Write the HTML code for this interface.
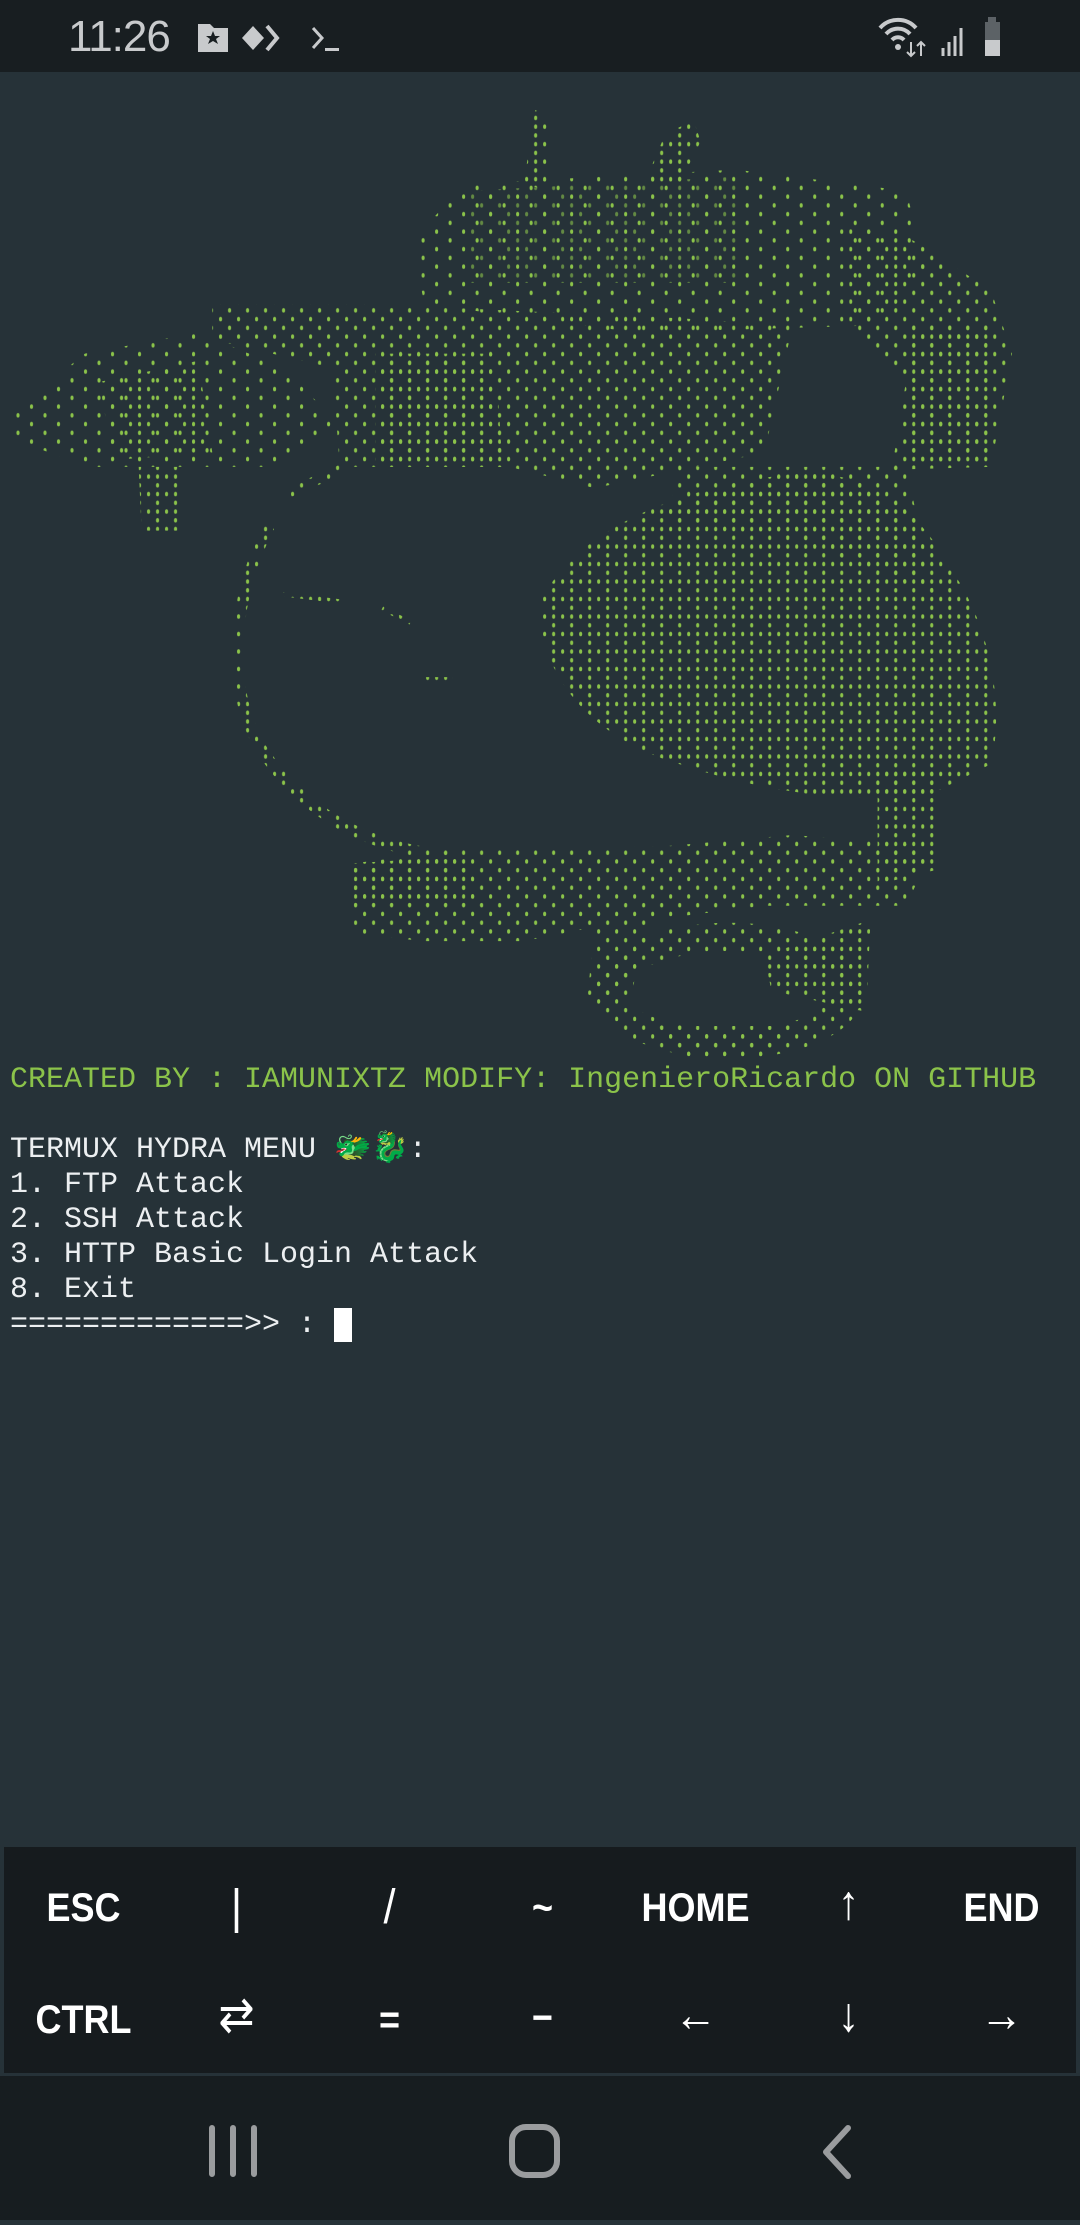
<!DOCTYPE html>
<html><head><meta charset="utf-8"><style>
*{margin:0;padding:0;box-sizing:border-box}
html,body{width:1080px;height:2220px;overflow:hidden;background:#263238}
.sb{position:absolute;left:0;top:0;width:1080px;height:72px;background:#181e21;color:#c8cacc;font-family:"Liberation Sans",sans-serif}
.time{position:absolute;left:68px;top:12px;font-size:44px;letter-spacing:-1px}
.term{position:absolute;left:10px;top:1063px;font-family:"Liberation Mono","DejaVu Sans Mono",monospace;font-size:30px;line-height:35px;color:#eceff1;white-space:pre}
.g{color:#8bc34a}
.cur{display:inline-block;width:18px;height:34px;background:#fff;vertical-align:top}
.kb{position:absolute;left:4px;top:1847px;width:1072px;height:226px;background:#161b1e;font-family:"Liberation Sans",sans-serif;color:#fff}
.k{position:absolute;width:153px;text-align:center;font-size:40px;line-height:50px;font-weight:bold;transform:scaleX(.9)}
.a{font-weight:normal;font-size:48px}
.nav{position:absolute;left:0;top:2076px;width:1080px;height:144px;background:#171d20}
</style></head><body>
<div class="sb">
<div class="time">11:26</div>
<svg style="position:absolute;left:195px;top:18px" width="160" height="40" viewBox="0 0 160 40">
<path d="M3 6 h12 l4 4 h14 v24 h-30z" fill="#c8cacc"/>
<path d="M18 13 l2 5 h5 l-4 3 2 5 -5 -3 -5 3 2 -5 -4 -3 h5z" fill="#181e21"/>
<path d="M58 8 l11 12 -11 12 -11 -12z" fill="#c8cacc"/>
<path d="M72 8 l10 12 -10 12" stroke="#c8cacc" stroke-width="4" fill="none"/>
<path d="M118 10 l9 10 -9 10" stroke="#c8cacc" stroke-width="3" fill="none"/>
<rect x="130" y="30" width="14" height="3" fill="#c8cacc"/>
</svg>
<svg style="position:absolute;left:878px;top:14px" width="140" height="46" viewBox="0 0 140 46">
<path d="M2 14 a24 24 0 0 1 36 0 M8 20 a16 16 0 0 1 24 0 M14 26 a8 8 0 0 1 12 0" stroke="#c8cacc" stroke-width="4" fill="none"/>
<circle cx="20" cy="33" r="3" fill="#c8cacc"/>
<path d="M33 28 v14 M29 38 l4 4 4 -4 M43 42 v-14 M39 32 l4 -4 4 4" stroke="#c8cacc" stroke-width="2" fill="none"/>
<path d="M65 42 v-8 M71 42 v-14 M77 42 v-20 M83 42 v-28" stroke="#c8cacc" stroke-width="3"/>
<rect x="110" y="3" width="8" height="6" fill="#5c6266"/>
<rect x="107" y="8" width="15" height="18" fill="#5c6266"/>
<rect x="107" y="26" width="15" height="16" fill="#c8cacc"/>
</svg>
</div>

<svg style="position:absolute;left:0;top:72px" width="1080" height="988" viewBox="0 51 763 698">
<defs>
<pattern id="d" width="6.36" height="6.18" patternUnits="userSpaceOnUse"><ellipse cx="3.18" cy="3.09" rx="1.1" ry="1.6" fill="#8bc34a"/></pattern>
<pattern id="m" width="12.72" height="12.36" patternUnits="userSpaceOnUse"><ellipse cx="3.18" cy="3.09" rx="1.1" ry="1.6" fill="#8bc34a"/><ellipse cx="9.54" cy="9.27" rx="1.1" ry="1.6" fill="#8bc34a"/><ellipse cx="9.54" cy="3.09" rx="1.1" ry="1.6" fill="#8bc34a"/></pattern>
<pattern id="s" width="12.72" height="12.36" patternUnits="userSpaceOnUse"><ellipse cx="3.18" cy="3.09" rx="1.1" ry="1.6" fill="#8bc34a"/><ellipse cx="9.54" cy="9.27" rx="1.1" ry="1.6" fill="#8bc34a"/></pattern>
<pattern id="t" width="19.08" height="12.36" patternUnits="userSpaceOnUse"><ellipse cx="3.18" cy="3.09" rx="1.1" ry="1.6" fill="#8bc34a"/><ellipse cx="12.72" cy="9.27" rx="1.1" ry="1.6" fill="#8bc34a"/></pattern>
</defs>
<g>
<path d="M370 130 L378 78 L386 80 L388 135 Z" fill="url(#m)"/>
<path d="M455 130 L470 95 L490 85 L495 100 L480 130 Z" fill="url(#m)"/>
<path d="M290 170 L330 130 L520 120 L640 135 L655 190 L620 230 L450 235 L300 215 Z" fill="url(#t)"/>
<path d="M330 135 L520 125 L520 200 L330 200 Z" fill="url(#s)" opacity=".6"/>
<path d="M600 160 L645 170 L700 205 L715 250 L700 330 L630 332 L640 270 L600 230 Z" fill="url(#s)"/>
<path d="M640 230 L700 230 L700 330 L640 330 Z" fill="url(#m)"/>
<path d="M150 215 L260 215 L480 225 L560 230 L540 320 L420 345 L360 330 L240 330 L235 260 L150 240 Z" fill="url(#s)"/>
<path d="M265 250 L350 250 L355 330 L265 330 Z" fill="url(#m)"/>
<path d="M10 290 L60 250 L140 235 L200 260 L240 300 L200 330 L150 330 L60 330 L10 310 Z" fill="url(#t)"/>
<path d="M70 270 L140 255 L150 320 L80 325 Z" fill="url(#s)"/>
<path d="M98 330 L128 330 L128 375 L100 375 Z" fill="url(#m)"/>
<path d="M380 430 C400 380 470 345 560 335 C610 330 650 360 670 400 C700 440 710 500 700 540 L660 560 C610 570 540 560 480 540 C430 525 385 490 380 430 Z" fill="url(#m)"/>
<path d="M480 330 L640 330 L660 420 L560 380 L470 370 Z" fill="url(#s)"/>
<path d="M620 545 L662 545 L660 615 L620 625 Z" fill="url(#m)"/>
<path d="M190 372 C165 420 158 485 185 530 C215 575 260 600 320 605" stroke="url(#m)" stroke-width="8" fill="none"/>
<path d="M200 350 L245 330" stroke="url(#s)" stroke-width="7" fill="none"/>
<path d="M200 420 L240 425 M270 430 L290 440 M300 480 L320 480" stroke="url(#d)" stroke-width="3" fill="none"/>
<path d="M250 610 L330 600 L470 598 L560 590 L660 598 L640 640 L540 640 L460 650 L445 705 L415 705 L420 655 L370 665 L300 665 L250 660 Z" fill="url(#s)"/>
<path d="M250 610 L330 605 L340 640 L250 640 Z" fill="url(#m)"/>
<ellipse cx="515" cy="700" rx="85" ry="38" stroke="url(#s)" stroke-width="20" fill="none"/>
<path d="M540 675 L615 650 L612 715 L545 700 Z" fill="url(#m)"/>
<path d="M465 725 L560 725 L545 748 L480 748 Z" fill="url(#s)"/>
</g>
</svg>

<div class="term"><span class="g">CREATED BY : IAMUNIXTZ MODIFY: IngenieroRicardo ON GITHUB</span>

TERMUX HYDRA MENU 🐲🐉:
1. FTP Attack
2. SSH Attack
3. HTTP Basic Login Attack
8. Exit
=============&gt;&gt; : <span class="cur"></span></div>

<div class="kb">
<div class="k" style="left:3px;top:36px">ESC</div>
<div class="k a" style="left:156px;top:36px">|</div>
<div class="k a" style="left:309px;top:36px">/</div>
<div class="k" style="left:462px;top:36px">~</div>
<div class="k" style="left:615px;top:36px">HOME</div>
<div class="k a" style="left:768px;top:32px">↑</div>
<div class="k" style="left:921px;top:36px">END</div>
<div class="k" style="left:3px;top:148px">CTRL</div>
<div class="k a" style="left:156px;top:144px">⇄</div>
<div class="k" style="left:309px;top:148px">=</div>
<div class="k" style="left:462px;top:146px">−</div>
<div class="k a" style="left:615px;top:144px">←</div>
<div class="k a" style="left:768px;top:144px">↓</div>
<div class="k a" style="left:921px;top:144px">→</div>
</div>

<div class="nav">
<svg width="1080" height="144" viewBox="0 0 1080 144">
<path d="M212 52 v46 M233 52 v46 M254 52 v46" stroke="#9a9c9e" stroke-width="6" stroke-linecap="round"/>
<rect x="512" y="51" width="45" height="48" rx="14" stroke="#9a9c9e" stroke-width="6" fill="none"/>
<path d="M848 52 l-22 24 22 24" stroke="#9a9c9e" stroke-width="6" fill="none" stroke-linecap="round" stroke-linejoin="round"/>
</svg>
</div>
</body></html>
